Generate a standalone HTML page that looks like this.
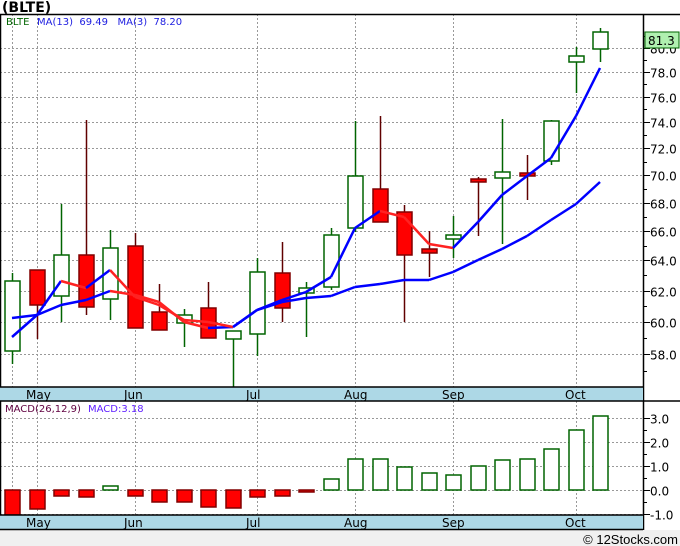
<!DOCTYPE html>
<html><head><meta charset="utf-8"><style>
body{margin:0;width:680px;height:546px;overflow:hidden;background:#fff;font-family:"Liberation Sans","DejaVu Sans",sans-serif}
svg{display:block}
</style></head><body>
<svg id="s" width="680" height="546" xmlns="http://www.w3.org/2000/svg" font-family="DejaVu Sans, Liberation Sans, sans-serif">
<rect x="0" y="530" width="680" height="16" fill="#f0f0f0"/>
<text x="2" y="12" font-size="14" font-weight="bold" fill="#000">(BLTE)</text>
<g id="g"></g>
<text x="678" y="544" font-size="13" fill="#000" text-anchor="end" font-family="Liberation Sans, sans-serif">© 12Stocks.com</text>
</svg>
<script>
var g=document.getElementById('g'),h='';
function L(x1,y1,x2,y2,c,w,d){h+='<line x1="'+x1+'" y1="'+y1+'" x2="'+x2+'" y2="'+y2+'" stroke="'+c+'" stroke-width="'+(w||1)+'"'+(d?' stroke-dasharray="2,2"':'')+'/>';}
function R(x,y,w,hh,f,s){h+='<rect x="'+x+'" y="'+y+'" width="'+w+'" height="'+hh+'" fill="'+f+'" stroke="'+s+'" stroke-width="1.5"/>';}
function T(x,y,t,c,s){h+='<text x="'+x+'" y="'+y+'" font-size="'+(s||11)+'" fill="'+c+'">'+t+'</text>';}
function py(p){return 48+951.5*(Math.log(80)-Math.log(p));}
for(var p=58;p<=80;p+=2){var y=Math.round(py(p))+.5;L(0,y,643,y,'#999',1,1);L(643,y,650,y,'#000');T(650,y+5,p.toFixed(1),'#000',12);}
for(var p=57;p<=81;p+=2){var y=Math.round(py(p))+.5;L(643,y,647,y,'#000');}
var vx=[12,37,135,257,355,453,576];
vx.forEach(function(x){L(x+.5,14,x+.5,387,'#999',1,1);L(x+.5,401,x+.5,515,'#999',1,1);});
[3,2,1,0,-1].forEach(function(v){var y=490-v*24+.5;L(0,y,643,y,'#999',1,1);L(643,y,650,y,'#000');T(650,y+5,v.toFixed(1),'#000',12);});
[2.5,1.5,.5,-.5].forEach(function(v){var y=490-v*24+.5;L(643,y,647,y,'#000');});
var xs=[12,37,61,86,110,135,159,184,208,233,257,282,306,331,355,380,404,429,453,478,502,527,551,576,600];
var C=[[281,351,273,364,1],[270,305,270,339,0],[255,296,204,322,1],[255,307,120,315,0],[248,299,230,320,1],[246,328,233,328,0],[312,330,284,330,0],[315,323,309,347,1],[308,338,282,338,0],[331,339,331,387,1],[272,334,258,356,1],[273,308,242,322,0],[288,293,282,337,1],[235,287,228,290,1],[176,228,121,232,1],[189,222,116,222,0],[212,255,205,322,0],[249,253,231,277,0],[235,239,216,258,1],[179,182,177,236,0],[172,178,119,244,1],[173,176,155,200,0],[121,161,120,165,1],[56,62,47,93,1],[32,49,28,62,1]];
C.forEach(function(c,i){var x=xs[i]+.5,col=c[4]?'#006400':'#600000';L(x,c[2],x,c[3],col,1.5);R(xs[i]-7,c[0],15,Math.max(c[1]-c[0],3),c[4]?'#fff':'#f00',c[4]?'#006400':'#800000');});
function line(pts){for(var i=1;i<pts.length;i++){var a=pts[i-1],b=pts[i];L(xs[i-1],a,xs[i],b,b>a+1?'#f22':'#00f',2.5);}}
line([318,315,305,300,291,295,302,322,328,327,310,302,298,296,287,284,280,280,272,260,249,236,220,204,182]);
line([337,315,281,288,270,297,305,320,322,327,310,300,292,277,228,211,217,244,248,222,195,176,158,116,68]);
var M=[-25,-19,-6,-7,4,-6,-12,-12,-17,-18,-7,-6,-2,11,31,31,23,17,15,24,30,31,41,60,74];
M.forEach(function(m,i){var x=xs[i]-7;if(m<0)R(x,490,15,-m,'#f00','#800000');else R(x,490-m,15,m,'#fff','#006400');});
L(0.5,14,0.5,530,'#000',1.5);L(643.5,14,643.5,530,'#000',1.5);L(0,14.5,680,14.5,'#000',1.5);
h+='<rect x="0" y="387" width="643" height="14" fill="#add8e6"/><rect x="0" y="515" width="643" height="14" fill="#add8e6"/>';
L(0,387,643,387,'#000',1.5);L(0,401,680,401,'#000',1.5);L(0,515,643,515,'#000',1.5);L(0,529.5,643,529.5,'#000',1.5);
[['May',37],['Jun',135],['Jul',257],['Aug',355],['Sep',453],['Oct',576]].forEach(function(m){T(m[1]-11,399,m[0],'#000',12);T(m[1]-11,527,m[0],'#000',12);});
h+='<rect x="645" y="32" width="34" height="16" fill="#b0f0b0" stroke="#006400"/>';T(648,45,'81.3','#000',12);
T(6,25,'BLTE','#006400',10);T(37,25,'MA(13)&#160;&#160;69.49&#160;&#160;&#160;MA(3)&#160;&#160;78.20','#2020e0',10);
T(5,412,'MACD(26,12,9)','#600040',10);T(88,412,'MACD:3.18','#6020ff',10);
g.innerHTML=h;
</script>
</body></html>
